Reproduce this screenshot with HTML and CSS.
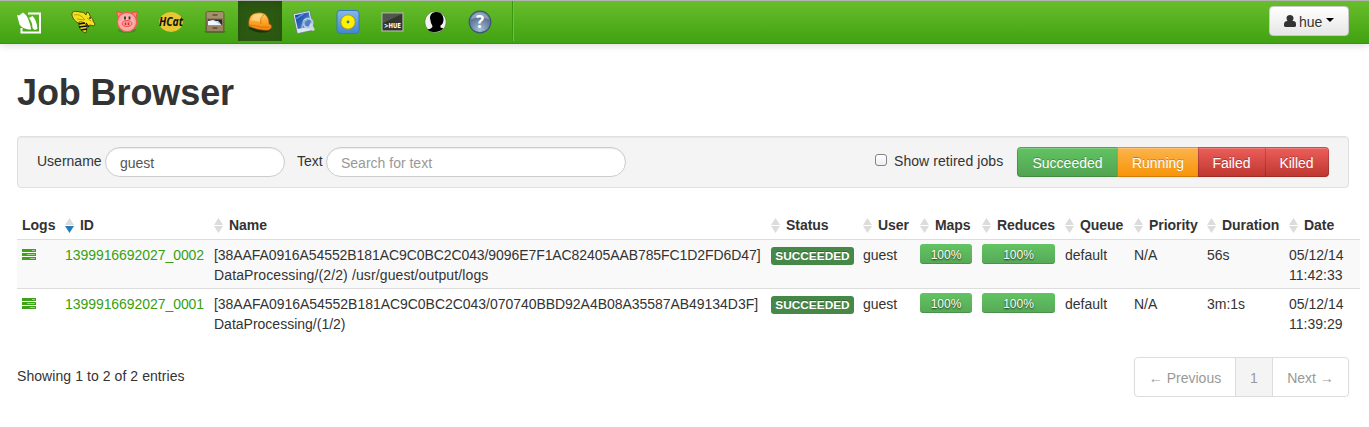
FILE: index.html
```html
<!DOCTYPE html>
<html lang="en">
<head>
<meta charset="utf-8">
<title>Job Browser</title>
<link rel="stylesheet" href="styles.css">
</head>
<body>
<svg width="0" height="0" class="defs">
  <defs>
    <linearGradient id="blue" x1="0" y1="0" x2="0" y2="1"><stop offset="0" stop-color="#83b9ec"/><stop offset="1" stop-color="#4485d0"/></linearGradient>
    <linearGradient id="photo" x1="0" y1="0" x2="1" y2="1"><stop offset="0" stop-color="#123f9c"/><stop offset="1" stop-color="#5a94de"/></linearGradient>
    <linearGradient id="hat" x1="0" y1="0" x2="0" y2="1"><stop offset="0" stop-color="#ffd36a"/><stop offset=".5" stop-color="#fda52c"/><stop offset="1" stop-color="#f08409"/></linearGradient>
    <linearGradient id="cab" x1="0" y1="0" x2="0" y2="1"><stop offset="0" stop-color="#a18b66"/><stop offset="1" stop-color="#6f5d40"/></linearGradient>
    <radialGradient id="pink"><stop offset="0" stop-color="#ffc5c2"/><stop offset="1" stop-color="#f7a19f"/></radialGradient>
    <radialGradient id="steel" cx=".5" cy=".85" r=".8"><stop offset="0" stop-color="#a5bdd6"/><stop offset=".7" stop-color="#5d7699"/><stop offset="1" stop-color="#7f93b0"/></radialGradient>
    <symbol id="logs" viewBox="0 0 14 11"><path fill="#3fa31a" d="M0 0h14v3H0zM0 4h14v3H0zM0 8h14v3H0z"/><path stroke="#d8f0cf" d="M10 1.500h3M5 5.500h8M8 9.500h5" stroke-width=".6"/></symbol>
    <symbol id="sort" viewBox="0 0 9 15"><path d="M4.500 0L9 7H0z"/><path class="down" d="M0 8h9l-4.500 7z"/></symbol>
  </defs>
</svg>
<header class="navbar">
  <a class="brand"><svg width="26" height="24" viewBox="0 0 26 24"><path fill="none" stroke="#fff" stroke-width="2" d="M11 2.500h12v19H4.500V17M15 21.500h8"/><path fill="#fff" d="M0 4l2 .5L6 1.500c3 2 5 5 6 9 1 3 2 5 2 8-5 0-10-2-11.500-5z"/><path fill="#fff" d="M12 7l3.500-2c3 3 4.500 7 5 13l-3 1-2-2c0-4-1-7-3.500-10z"/></svg></a>
  <nav class="apps">
    <a><svg width="26" height="26" viewBox="0 0 26 26"><path stroke="#2b2a06" stroke-width=".7" fill="#f3e11c" d="M1 5c0-3 4-3 8-2 3 0 5 1 6 3l1-3 2 1 1 3c2 2 3 3 3 5l2 3-1 2-4-1-3 2-3-4-3 1-3-1C4 12 1 9 1 5z"/><path fill="none" stroke="#a48d10" stroke-width=".8" d="M3 6c4-1 7 0 11 5M6 10l7 1M16 9l4 3"/><path fill="#f0da18" stroke="#171706" stroke-width=".6" d="M8 13c4-1 7 2 8 5l-1 6c-4-1-8-5-7-11z"/><path stroke="#111" stroke-width="1.700" fill="none" d="M8 15l6-1M8 18l8-1M10 21l6-1"/><path stroke="#111" stroke-width="1.200" d="M15 14l3 4M19 8v2"/></svg></a>
    <a><svg width="26" height="26" viewBox="0 0 26 26"><ellipse cx="12" cy="21" rx="9" ry="3" fill="#267b0d" opacity=".5"/><path d="M1.500 2.500l7 2-5 6zM22.500 2.500l-7 2 5 6z" fill="#ff8a85" stroke="#f44a43"/><circle cx="12" cy="13" r="9.700" fill="url(#pink)" stroke="#f35b53" stroke-width="1.300"/><ellipse cx="12" cy="14.500" rx="4.800" ry="2.900" fill="#ff9f9d" stroke="#ee4943"/><path stroke="#d62f2b" stroke-width="1.600" d="M10.500 13.500v2.500M13.500 13.500v2.500"/><path stroke="#263b30" stroke-width="1.800" d="M10 7.500v3M14.500 7.500v3"/></svg></a>
    <a><svg width="26" height="26" viewBox="0 0 26 26"><ellipse cx="12" cy="13" rx="11.800" ry="10" fill="#e8c832"/><text x="0" y="17" class="hcat" textLength="24" lengthAdjust="spacingAndGlyphs">HCat</text></svg></a>
    <a><svg width="26" height="26" viewBox="0 0 26 26"><path d="M1 22h22l-2 2H3z" fill="#276c12" opacity=".6"/><rect x="3" y="2.500" width="18" height="20.500" rx="2" fill="url(#cab)" stroke="#6b5a3c"/><path d="M4 3.500h16V9H4z" fill="#a4906d"/><path d="M9.500 6h5" stroke="#5e4e34" stroke-width="1.500"/><path d="M5 10.500h14v6H5z" fill="#292927"/><path d="M5 12l5-1 3 1h2l4 4.500H5z" fill="#f2f7ff"/><path d="M11 12l5 1 2 3z" fill="#a9cae9"/><path d="M4 16.500h16V22H4z" fill="#9a8562"/><path d="M9.500 19h5" stroke="#5e4e34" stroke-width="1.500"/></svg></a>
    <a class="active"><svg width="26" height="26" viewBox="0 0 26 26"><path d="M1 19c5 4 17 7 23 2l-1-4z" fill="#142808" opacity=".8"/><path d="M2 17C1 9 4 4 11 4c7-1 11 4 11 11l2 1c1 2 0 4-2 5-6 1-14-1-20-4z" fill="url(#hat)" stroke="#c65e05" stroke-width=".6"/><path d="M4 12c1-4 4-7 8-7 2 0 4 1 5 2-3 1-4 4-4 6-3-1-6-2-9-1z" fill="#ffd786" opacity=".8"/><path d="M14 15c-1-4 0-8 3-9M2 16c6 0 11 3 20 2" fill="none" stroke="#d96e0a" stroke-width=".8"/></svg></a>
    <a><svg width="26" height="26" viewBox="0 0 26 26"><g transform="rotate(-12 13 13)"><path d="M4 3h17v20H4z" fill="#dce5ec" stroke="#58747d" stroke-width=".6"/><path d="M5.500 4.500h14V18.500h-14z" fill="url(#photo)"/><path d="M6 8l8-3" stroke="#5f93dc" stroke-width="1.500"/></g><circle cx="17" cy="14" r="4.500" fill="#4d82cb" stroke="#b9cce5" stroke-width="2"/><path d="M11 19c0-4 2-7 5-8" fill="none" stroke="#8fb0dc" stroke-width="1.500"/><path d="M20 13l4 8-3 1-3-5z" fill="#ccd7e2"/></svg></a>
    <a><svg width="26" height="26" viewBox="0 0 26 26"><rect x="2" y="1.500" width="22" height="23" rx="3" fill="url(#blue)" stroke="#3978bd"/><circle cx="13" cy="13" r="7.200" fill="#fff200" stroke="#a49a28"/><circle cx="13" cy="13" r="1.400" fill="#3f7392"/></svg></a>
    <a><svg width="26" height="26" viewBox="0 0 26 26"><rect x="3" y="4" width="21" height="18" fill="#32362e" stroke="#aeb7aa" stroke-width="1.200"/><path d="M4 5h19L4 14z" fill="#50564c"/><text x="5" y="19" class="shell" textLength="17" lengthAdjust="spacingAndGlyphs">&gt;HUE</text></svg></a>
    <a><svg width="26" height="26" viewBox="0 0 26 26"><circle cx="12.500" cy="13" r="10.700" fill="#f2f2f2" stroke="#376f20" stroke-width=".6"/><path d="M7 9c0-4 3-6 6.500-6 4.500 0 7 3.500 7 7.500 0 3-1 5-3 6v2l3 1c-4 4-11 5-16 1 3-.5 5-1.500 5-3.500L8 14z" fill="#000"/></svg></a>
    <a><svg width="26" height="26" viewBox="0 0 26 26"><circle cx="13" cy="13" r="10.800" fill="url(#steel)" stroke="#3e5770" stroke-width="1.200"/><path d="M4 10c2-5 5-6 9-6s7 2 9 6c-6-2-12-2-18 0z" fill="#a8b7ca" opacity=".6"/><text x="13" y="18.500" class="help">?</text></svg></a>
  </nav>
  <div class="divider"></div>
  <button class="user"><svg width="12" height="12" viewBox="0 0 12 12"><path fill="#333" d="M2.500 3c0-4 7-4 7 0 0 1-.3 2-1 3 3 .2 3.500 1 3.500 3.500V11l-1 1H1l-1-1V9.500C0 7 1 6.200 3.500 6c-.7-1-1-2-1-3z"/></svg><span>hue</span><i class="caret"></i></button>
</header>
<main class="content">
  <h1>Job Browser</h1>
  <form class="well">
    <label class="lab-user">Username</label><input class="in-user" type="text" value="guest">
    <label class="lab-text">Text</label><input class="in-text" type="text" placeholder="Search for text">
    <div class="filters">
      <label class="retired"><i class="check"></i><span>Show retired jobs</span></label>
      <div class="buttons"><a class="b ok">Succeeded</a><a class="b warn">Running</a><a class="b bad">Failed</a><a class="b bad last">Killed</a></div>
    </div>
  </form>
  <table class="jobs">
    <colgroup><col class="c1"><col class="c2"><col class="c3"><col class="c4"><col class="c5"><col class="c6"><col class="c7"><col class="c8"><col class="c9"><col class="c10"><col class="c11"></colgroup>
    <thead><tr>
      <th>Logs</th>
      <th><div class="h desc"><svg><use href="#sort"/></svg>ID</div></th>
      <th><div class="h"><svg><use href="#sort"/></svg>Name</div></th>
      <th><div class="h"><svg><use href="#sort"/></svg>Status</div></th>
      <th><div class="h"><svg><use href="#sort"/></svg>User</div></th>
      <th><div class="h"><svg><use href="#sort"/></svg>Maps</div></th>
      <th><div class="h"><svg><use href="#sort"/></svg>Reduces</div></th>
      <th><div class="h"><svg><use href="#sort"/></svg>Queue</div></th>
      <th><div class="h"><svg><use href="#sort"/></svg>Priority</div></th>
      <th><div class="h"><svg><use href="#sort"/></svg>Duration</div></th>
      <th><div class="h"><svg><use href="#sort"/></svg>Date</div></th>
    </tr></thead>
    <tbody>
      <tr class="odd"><td><svg class="logs"><use href="#logs"/></svg></td><td><a class="id">1399916692027_0002</a></td><td><span class="hash">[38AAFA0916A54552B181AC9C0BC2C043/9096E7F1AC82405AAB785FC1D2FD6D47]</span><br><span class="path">DataProcessing/(2/2) /usr/guest/output/logs</span></td><td><span class="label">SUCCEEDED</span></td><td>guest</td><td class="prog"><div class="bar">100%</div></td><td class="prog"><div class="bar">100%</div></td><td>default</td><td>N/A</td><td>56s</td><td>05/12/14<br>11:42:33</td></tr>
      <tr><td><svg class="logs"><use href="#logs"/></svg></td><td><a class="id">1399916692027_0001</a></td><td><span class="hash second">[38AAFA0916A54552B181AC9C0BC2C043/070740BBD92A4B08A35587AB49134D3F]</span><br>DataProcessing/(1/2)</td><td><span class="label">SUCCEEDED</span></td><td>guest</td><td class="prog"><div class="bar">100%</div></td><td class="prog"><div class="bar">100%</div></td><td>default</td><td>N/A</td><td>3m:1s</td><td>05/12/14<br>11:39:29</td></tr>
    </tbody>
  </table>
  <footer class="foot">
    <span class="info">Showing 1 to 2 of 2 entries</span>
    <div class="pages"><a class="prev">← Previous</a><a class="cur">1</a><a class="next">Next →</a></div>
  </footer>
</main>
</body>
</html>
```
FILE: styles.css
```css
* { box-sizing: border-box; }
body { margin: 0; background: #fff; color: #333; font: 14px/20px "Liberation Sans", Arial, sans-serif; overflow: hidden; }
.defs { display: block; height: 0; }
.navbar { display: flex; height: 44px; padding-left: 17px; border-top: 1px solid #b3b3b3; border-bottom: 1px solid #379313; background: linear-gradient(#69bd2b, #40a212); box-shadow: 0 1px 8px rgba(0,0,0,.16); }
.brand { width: 45px; padding-top: 10px; }
.brand svg { display: block; }
.apps { display: flex; width: 451px; margin-left: -1px; }
.apps a { display: flex; width: 44px; height: 40px; padding-left: 1px; justify-content: center; align-items: center; }
.apps a:nth-child(-n+4) { padding-left: 2px; }
.apps svg { margin-top: 1px; }
.apps .active { width: 44px; padding-left: 0; margin: 0 -1px 0 1px; background: #2c5912; box-shadow: inset 0 3px 8px rgba(0,0,0,.125); }
.divider { height: 40px; border-left: 1px solid #379711; border-right: 1px solid #73c43b; }
.hcat { font: italic bold 11.5px "Open Sans", sans-serif; fill: #111; }
.shell { font: bold 7px "DejaVu Sans", sans-serif; fill: #fff; }
.help { font: bold 17px "Open Sans", sans-serif; fill: #fff; text-anchor: middle; }
.user { display: flex; align-items: center; width: 80px; height: 30px; margin: 5px 20px 0 auto; padding: 1px 0 0 14px; border: 1px solid #c9c9c9; border-radius: 4px; background: linear-gradient(#fff, #e6e6e6); color: #333; font: 14px/20px "Liberation Sans", sans-serif; text-shadow: 0 1px 1px rgba(255,255,255,.75); }
.user svg { margin-top: -1px; }
.user span { width: 27px; margin-left: 3px; text-align: left; }
.caret { border: 4px solid transparent; border-top-color: #000; border-bottom: 0; margin-top: -3px; }
.content { padding: 0 20px 0 17px; }
h1 { margin: 29px 0 23px; font-size: 36px; line-height: 40px; letter-spacing: -.1px; }
.well { display: flex; height: 52px; margin: 0 0 23px; padding: 10px 19px; border: 1px solid #e0e0e0; border-radius: 4px; background: #f4f4f4; box-shadow: inset 0 1px 1px rgba(0,0,0,.05); }
.well label { padding-top: 4px; }
.lab-user { width: 68px; }
.lab-text { width: 29px; margin-left: 12px; }
.well input { height: 30px; padding: 5px 14px 3px; border: 1px solid #ccc; border-radius: 15px; background: #fff; color: #555; font: 14px "Liberation Sans", sans-serif; box-shadow: inset 0 1px 1px rgba(0,0,0,.075); }
.well input::placeholder { color: #999; }
.well .in-user { width: 180px; }
.well .in-text { width: 300px; }
.filters { display: flex; margin-left: auto; }
.retired { display: flex; width: 142px; }
.retired span { margin-left: 7px; white-space: nowrap; letter-spacing: .06px; }
.check { width: 12px; height: 12px; margin-top: 3px; border: 1px solid #848484; border-radius: 3px; background: linear-gradient(#fff, #eee); }
.buttons { display: flex; }
.b { height: 30px; padding-top: 5px; color: #fff; text-align: center; text-shadow: 0 -1px 0 rgba(0,0,0,.25); border: 1px solid rgba(0,0,0,.16); border-right: 0; box-shadow: inset 0 1px 0 rgba(255,255,255,.2), 0 1px 2px rgba(0,0,0,.05); background-clip: border-box; background-origin: border-box; }
.ok { width: 100px; border-radius: 4px 0 0 4px; background-image: linear-gradient(#62c462, #51a351); }
.warn { width: 81px; background-image: linear-gradient(#fbb450, #f89406); }
.bad { width: 67px; padding-right: 1px; background-image: linear-gradient(#ee5f5b, #bd362f); }
.last { width: 64px; border-right: 1px solid rgba(0,0,0,.16); border-radius: 0 4px 4px 0; }
.jobs { width: 1343px; table-layout: fixed; border-collapse: separate; border-spacing: 0; white-space: nowrap; }
.jobs th, .jobs td { padding: 4px 5px; vertical-align: top; text-align: left; }
.jobs td { padding: 5px 5px 3px; border-top: 1px solid #ddd; height: 49px; }
.jobs td.prog { padding-top: 4px; }
.odd td { background: #f9f9f9; }
.c1 { width: 43px; } .c2 { width: 149px; } .c3 { width: 557px; } .c4 { width: 92px; }
.c5 { width: 57px; } .c6 { width: 62px; } .c7 { width: 83px; } .c8 { width: 69px; }
.c9 { width: 73px; } .c10 { width: 82px; } .c11 { width: 76px; }
.h { display: flex; gap: 6px; letter-spacing: -.05px; }
.h svg { width: 9px; height: 15px; margin-top: 3px; flex: none; fill: #dcdcdc; }
.desc { --down: #267db8; }
.down { fill: var(--down, #dcdcdc); }
.logs { display: block; width: 14px; height: 11px; margin-top: 4px; }
.id { color: #38a010; letter-spacing: -.06px; }
.hash { letter-spacing: -.08px; }
.second { letter-spacing: -.035px; }
.path { letter-spacing: .12px; }
.label { display: block; width: 83px; height: 18px; margin-top: 2px; padding-top: 2px; border-radius: 3px; background: #468847; color: #fff; font-size: 11.844px; font-weight: bold; line-height: 14px; text-align: center; text-shadow: 0 -1px 0 rgba(0,0,0,.25); }
.bar { height: 20px; border-radius: 3px; background: linear-gradient(#62c462, #57a957); box-shadow: inset 0 -1px 0 rgba(0,0,0,.15); color: #fff; font-size: 12px; line-height: 22px; text-align: center; text-shadow: 0 1px 2px rgba(0,0,0,.8); }
.foot { display: flex; justify-content: space-between; margin-top: 20px; }
.info { padding-top: 9px; letter-spacing: .07px; }
.pages { display: flex; height: 40px; border: 1px solid #ddd; border-radius: 4px; box-shadow: 0 1px 2px rgba(0,0,0,.05); color: #999; line-height: 20px; text-align: center; }
.pages a { padding-top: 10px; white-space: nowrap; }
.prev { width: 101px; border-right: 1px solid #ddd; }
.cur { width: 37px; border-right: 1px solid #ddd; background: #f4f4f4; }
.next { width: 75px; }
```
